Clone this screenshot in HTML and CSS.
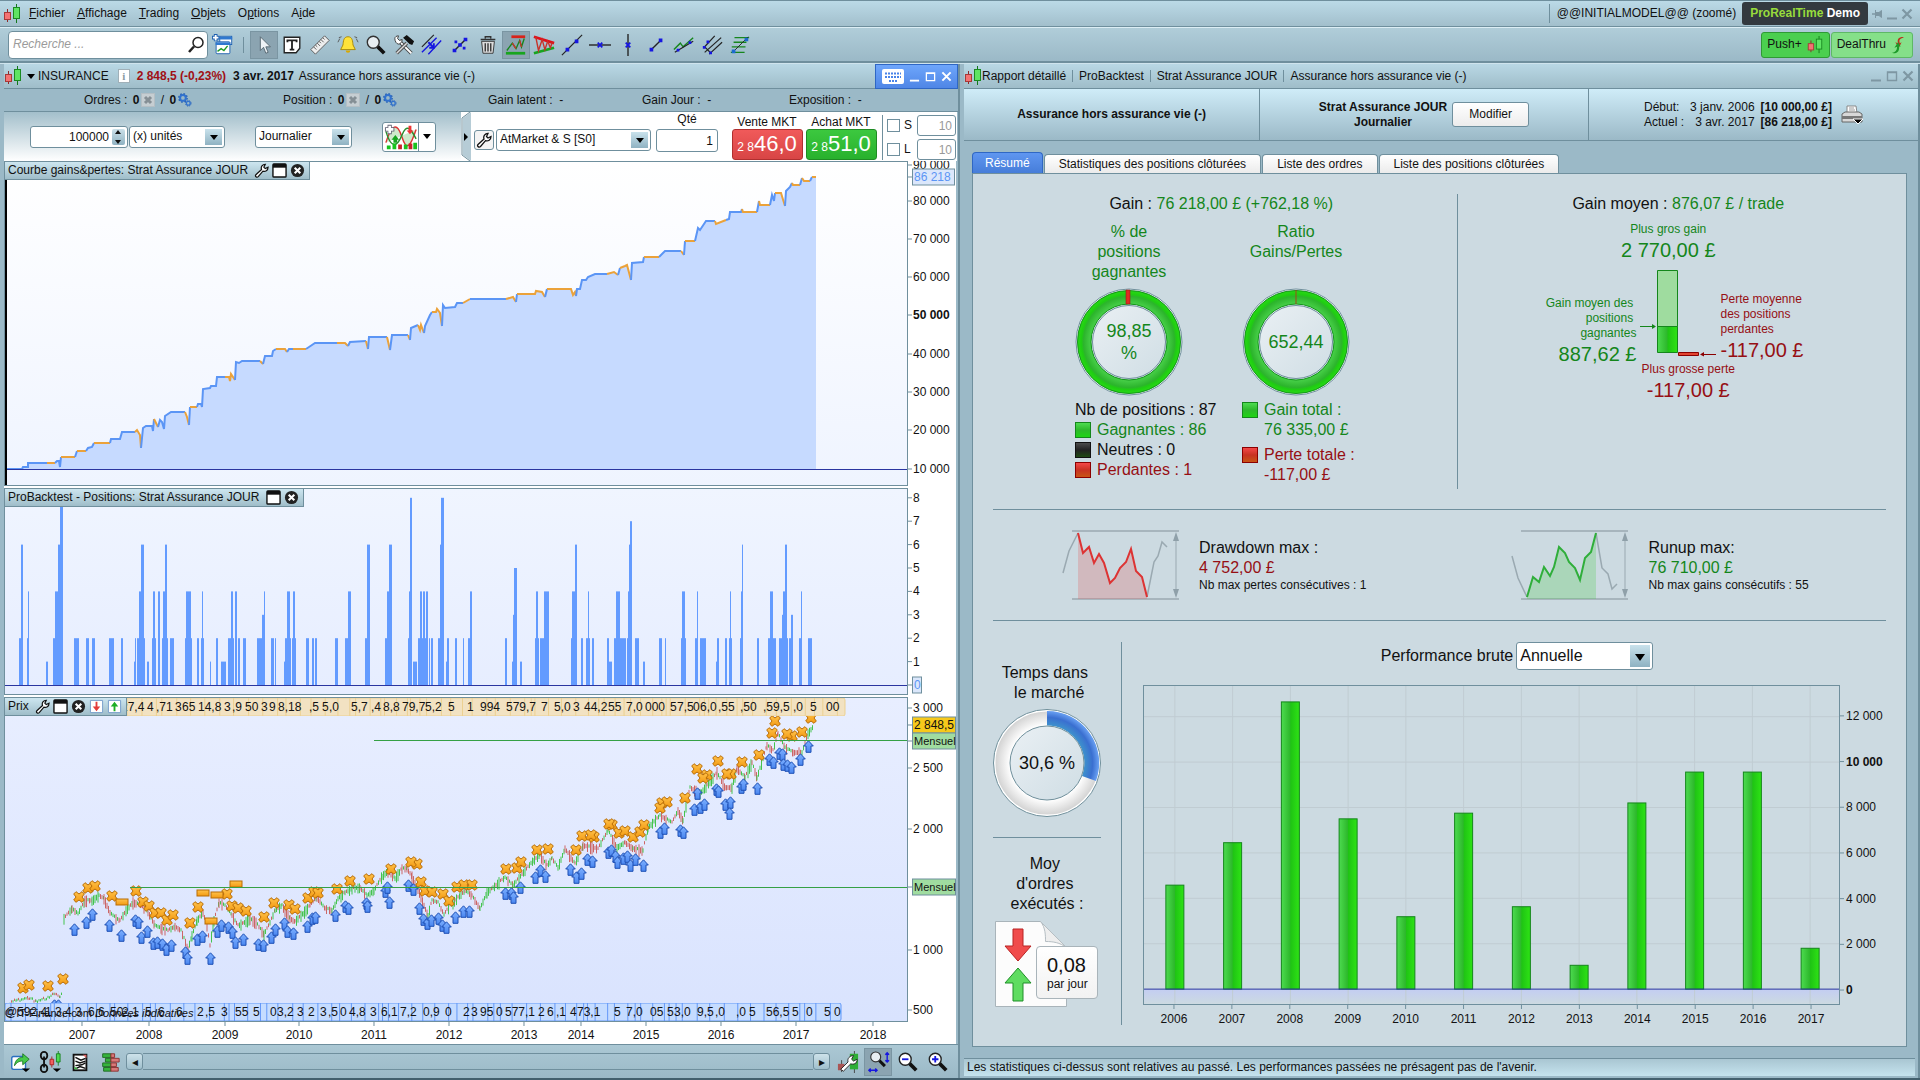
FILE: index.html
```html
<!DOCTYPE html>
<html lang="fr">
<head>
<meta charset="UTF-8" />
<meta name="viewport" content="width=device-width, initial-scale=1" />
<title>ProRealTime - Rapport détaillé</title>
<link rel="stylesheet" href="styles.css">
</head>
<body>

<svg class="defs" aria-hidden="true">
  <defs>
    <linearGradient id="g-green" x1="0" x2="1" y1="0" y2="0"><stop offset="0" stop-color="#4ddb50"/><stop offset=".48" stop-color="#2db82b"/><stop offset=".52" stop-color="#1fc414"/><stop offset="1" stop-color="#2ee315"/></linearGradient>
    <linearGradient id="g-orange" x1="0" x2="0" y1="0" y2="1"><stop offset="0" stop-color="#ffc24a"/><stop offset="1" stop-color="#f39a12"/></linearGradient>
    <linearGradient id="g-blue" x1="0" x2="0" y1="0" y2="1"><stop offset="0" stop-color="#7db0ff"/><stop offset="1" stop-color="#4a86f0"/></linearGradient>
    <linearGradient id="g-below" x1="0" x2="0" y1="0" y2="1"><stop offset="0" stop-color="#c3cdf2"/><stop offset="1" stop-color="#ccdae1"/></linearGradient>
    <linearGradient id="g-inner" x1="0" x2="1" y1="0" y2="1"><stop offset="0" stop-color="#eaf0f4"/><stop offset="1" stop-color="#cfdde4"/></linearGradient>
    <radialGradient id="g-ring" gradientUnits="userSpaceOnUse" cx="54" cy="54" r="53"><stop offset=".7" stop-color="#4bd34c"/><stop offset=".86" stop-color="#2cb42c"/><stop offset=".9" stop-color="#1fcd12"/><stop offset="1" stop-color="#2be015"/></radialGradient>
    <radialGradient id="g-white" gradientUnits="userSpaceOnUse" cx="54" cy="54" r="53"><stop offset=".7" stop-color="#fff"/><stop offset="1" stop-color="#cfcfcf"/></radialGradient>
    <radialGradient id="g-bluering" gradientUnits="userSpaceOnUse" cx="54" cy="54" r="53"><stop offset=".7" stop-color="#3e93cc"/><stop offset=".86" stop-color="#3a6fd0"/><stop offset="1" stop-color="#70a8f8"/></radialGradient>
    <symbol id="candles" viewBox="0 0 18 20"><path d="M4.500 5v13" stroke="#8d2a2a"/><rect x="1.500" y="8.500" width="6" height="7" fill="#f47373" stroke="#a83838"/><path d="M13.500 0v19" stroke="#14781b"/><rect x="10.500" y="3.500" width="6" height="11" fill="#5fe463" stroke="#1a8a22"/></symbol>
    <symbol id="wrench" viewBox="0 0 16 16"><path d="M2 12.500 8 7C7 4 9 1.500 12 1.500L10.500 4.500 12 6 15 4.500C15 8 12 9.500 9.500 8.700L4.500 14.500C3 16 .5 14 2 12.500z" fill="#fff" stroke="#111" stroke-width="1.300"/></symbol>
    <symbol id="win" viewBox="0 0 16 16"><rect x="1" y="1" width="14" height="14" rx="1" fill="#fff" stroke="#111" stroke-width="1.500"/><path d="M1 1h14v4H1z" fill="#111"/></symbol>
    <symbol id="close" viewBox="0 0 16 16"><circle cx="8" cy="8" r="7" fill="#222"/><path d="m5 5 6 6m0-6-6 6" stroke="#fff" stroke-width="2.200"/></symbol>
    <symbol id="xmark" viewBox="0 0 12 12"><path d="M3 .7 6 3 9 .7 11.300 3 9 6l2.300 3L9 11.300 6 9l-3 2.300L.7 9 3 6 .7 3z" fill="url(#g-orange)" stroke="#b86c06"/></symbol>
    <symbol id="buy" viewBox="0 0 11 13"><path d="M5.500.8 10.300 6H8v6.300H3V6H.7z" fill="url(#g-blue)" stroke="#1d4fb4"/></symbol>
    <symbol id="gears" viewBox="0 0 17 17"><circle cx="6" cy="6" r="3.500" fill="none" stroke="#3172cf" stroke-width="2.500"/><circle cx="6" cy="6" r="5.200" fill="none" stroke="#2460b8" stroke-width="1.500" stroke-dasharray="2 2.080"/><circle cx="12.500" cy="12.500" r="2.300" fill="none" stroke="#3172cf" stroke-width="1.600"/><circle cx="12.500" cy="12.500" r="3.500" fill="none" stroke="#2460b8" stroke-dasharray="1.500 1.250"/></symbol>
    <symbol id="grayx" viewBox="0 0 14 14"><rect x=".5" y=".5" width="13" height="13" fill="#c6ced2" stroke="#b4bfc5"/><path d="m4 4 6 6m0-6-6 6" stroke="#858f95" stroke-width="3"/></symbol>
    <symbol id="lens" viewBox="0 0 24 24"><path d="m13 13 8 8" stroke="#111" stroke-width="4"/><circle cx="9" cy="9" r="6.500" fill="#e8eef2" stroke="#333" stroke-width="1.500"/></symbol>
    <symbol id="wmin" viewBox="0 0 12 12"><path d="M1 10.500h10" stroke="currentColor" stroke-width="2"/></symbol>
    <symbol id="wmax" viewBox="0 0 12 12"><path d="M1.500 2h9v8.500h-9zM1 2.500h10" fill="none" stroke="currentColor" stroke-width="1.400"/></symbol>
    <symbol id="wclose" viewBox="0 0 12 12"><path d="m1.500 1.500 9 9m0-9-9 9" stroke="currentColor" stroke-width="2.200"/></symbol>
  </defs>
</svg>

<header class="menubar">
  <svg class="logo"><use href="#candles"/></svg>
  <nav>
    <a href="#"><u>F</u>ichier</a>
    <a href="#"><u>A</u>ffichage</a>
    <a href="#"><u>T</u>rading</a>
    <a href="#"><u>O</u>bjets</a>
    <a href="#">O<u>p</u>tions</a>
    <a href="#">A<u>i</u>de</a>
  </nav>
  <span class="model">@@INITIALMODEL@@ (zoomé)</span>
  <span class="brand"><b class="lime">ProRealTime</b> <b>Demo</b></span>
  <span class="wincontrols">
    <svg viewBox="0 0 12 12"><path d="M1 6h4" stroke="currentColor" stroke-width="1.500"/><path d="M4.500 2v8M5 4.500h3l2.500-2v7L8 7.500H5z" stroke="currentColor" fill="currentColor"/></svg>
    <svg><use href="#wmin"/></svg>
    <svg><use href="#wclose"/></svg>
  </span>
</header>

<div class="toolbar">
  <div class="search">
    <input type="text" placeholder="Recherche ..." aria-label="Recherche">
    <svg viewBox="0 0 18 18"><circle cx="11" cy="6.500" r="5" fill="#fff" stroke="#222" stroke-width="1.500"/><path d="M7 10.500 2 16" stroke="#222" stroke-width="2.500"/></svg>
  </div>
  <button class="tool" aria-label="Nouvelle fenêtre"><svg viewBox="0 0 24 24"><rect x="8.500" y="2.500" width="13" height="9" fill="#fff" stroke="#1d5faf"/><path d="M8 3h14v3H8z" fill="#2f78cf"/><rect x="4.500" y="8.500" width="15" height="13" rx="1" fill="#fff" stroke="#1d5faf"/><path d="M4 9h16v3H4z" fill="#2f78cf"/><path d="m6 19 4-3 3 2 4-5" stroke="#1d9a26" stroke-width="1.500" fill="none"/><path d="M4 0v8M0 4h8" stroke="#1d5faf" stroke-width="4"/><path d="M4 1v6M1 4h6" stroke="#fff" stroke-width="2"/></svg></button>
  <i class="sep"></i>
  <button class="tool on" aria-label="Curseur"><svg viewBox="0 0 24 24"><path d="M8 3v15l3.500-3.500L14 21l2.500-1-2.500-6h5z" fill="#eef3f6" stroke="#556670"/></svg></button>
  <button class="tool" aria-label="Texte"><svg viewBox="0 0 24 24"><path d="M3.500 3.500h17v12l-4 5h-13z" fill="#fff" stroke="#222" stroke-width="1.500"/><path d="M7 9V7h10v2M12 7v10M9.500 17h5" stroke="#222" stroke-width="2" fill="none"/></svg></button>
  <button class="tool" aria-label="Règle"><svg viewBox="0 0 24 24"><path d="M2 17 17 2l5 5L7 22z" fill="#eee" stroke="#555"/><path d="m5 14 3 3m-1-5 2 2m0-4 3 3m-1-5 2 2m0-4 3 3m-1-5 2 2" stroke="#555"/></svg></button>
  <button class="tool" aria-label="Alerte"><svg viewBox="0 0 24 24"><path d="M12 3c-5 0-5 5-5.500 9L4 17h16l-2.500-5C17 8 17 3 12 3z" fill="#ffe23a" stroke="#a88700"/><path d="M9.500 18a2.500 2.500 0 0 0 5 0z" fill="#d9a800"/><path d="M3 5 1 9m4-6L2 4M21 5l2 4m-4-6 3 1" stroke="#555"/></svg></button>
  <button class="tool" aria-label="Loupe"><svg viewBox="0 0 24 24"><use href="#lens"/></svg></button>
  <button class="tool" aria-label="Outils"><svg viewBox="0 0 24 24"><path d="m7 8 13 13" stroke="#444" stroke-width="4"/><path d="m7 8 13 13" stroke="#fff" stroke-width="2"/><path d="M2 5c0-2 2-3 4-3L5 5l2 2 3-1c0 3-2 5-4 5S2 8 2 5z" fill="#fff" stroke="#333"/><path d="M4 21 15 10" stroke="#555" stroke-width="4"/><path d="M4 21 15 10" stroke="#ddd" stroke-width="1.500"/><path d="m11 4 4-3 8 7-2 4-3-1-3-3z" fill="#111"/></svg></button>
  <button class="tool" aria-label="Canal"><svg viewBox="0 0 24 24"><path d="M1 14 14 1" stroke="#222" stroke-width="1.300"/><path d="M1 20 17 4M8 22 22 7" stroke="#1616e0" stroke-width="1.500"/><path d="m8 9 6 6m-5 0h5v-5" stroke="#1616e0" stroke-width="2" fill="none"/></svg></button>
  <button class="tool" aria-label="Segment"><svg viewBox="0 0 24 24"><path d="M6 18 18 6" stroke="#222" stroke-width="1.500"/><path d="M4 16h4v4H4zM16 4h4v4h-4zM10 10h4v4h-4zM6 7h3v3H6zM15 14h3v3h-3z" fill="#1616e0"/></svg></button>
  <button class="tool" aria-label="Supprimer"><svg viewBox="0 0 24 24"><path d="M5 8h14l-1.500 13h-11z" fill="#ddd" stroke="#333"/><path d="M4 6h16M9 5V3h6v2M9 10v9m3-9v9m3-9v9" stroke="#333" stroke-width="1.500" fill="none"/></svg></button>
  <button class="tool on" aria-label="Supports"><svg viewBox="0 0 24 24"><path d="M7 3h15" stroke="#d8231a" stroke-width="3"/><path d="M1 21h21" stroke="#18a51f" stroke-width="3"/><path d="m2 18 6-8 4 6 4-9 2 7 3-9" stroke="#16861d" stroke-width="1.500" fill="none"/><path d="m8 10 4 6m4-9 2 7" stroke="#c8332a" stroke-width="1.500"/></svg></button>
  <button class="tool" aria-label="Triangles"><svg viewBox="0 0 24 24"><path d="m1 3 22 7" stroke="#e0101a" stroke-width="3"/><path d="m1 21 22-6" stroke="#18a51f" stroke-width="3"/><path d="m3 3 3 15 4-12 3 11 3-9 3 7 2-6" stroke="#c8332a" stroke-width="1.500" fill="none"/></svg></button>
  <button class="tool" aria-label="Droite"><svg viewBox="0 0 24 24"><path d="M1 23 23 1" stroke="#222" stroke-width="1.300"/><path d="M5 15h4v4H5zM15 6h4v4h-4z" fill="#1616e0"/></svg></button>
  <button class="tool" aria-label="Horizontale"><svg viewBox="0 0 24 24"><path d="M0 12h24" stroke="#222" stroke-width="1.500"/><path d="m9.500 9.500 5 5m0-5-5 5" stroke="#1616e0" stroke-width="2"/></svg></button>
  <button class="tool" aria-label="Verticale"><svg viewBox="0 0 24 24"><path d="M12 0v24" stroke="#222" stroke-width="1.500"/><path d="m9.500 9.500 5 5m0-5-5 5" stroke="#1616e0" stroke-width="2"/></svg></button>
  <button class="tool" aria-label="Segment court"><svg viewBox="0 0 24 24"><path d="M7 17 17 7" stroke="#222" stroke-width="1.500"/><path d="M5 15h4v4H5zM15 5h4v4h-4z" fill="#1616e0"/></svg></button>
  <button class="tool" aria-label="Régression"><svg viewBox="0 0 24 24"><path d="m1 17 7-7 3 4 11-10" stroke="#16861d" stroke-width="1.500" fill="none"/><path d="M2 20 22 8" stroke="#222" stroke-width="1.300"/><path d="M4 16h3v3H4zM17 8h3v3h-3z" fill="#1616e0"/></svg></button>
  <button class="tool" aria-label="Fourchette"><svg viewBox="0 0 24 24"><path d="M3 15 15 2M4 20 22 4M9 22 23 9M4 14l7 7" stroke="#222" stroke-width="1.300"/><path d="M2 13h3v3H2zM9 19h3v3H9zM6 7h3v3H6z" fill="#1616e0"/></svg></button>
  <button class="tool" aria-label="Fibonacci"><svg viewBox="0 0 24 24"><path d="M6 4h16M5 9h14M3 14h15M2 20h15" stroke="#16861d" stroke-width="1.500"/><path d="M4 20 21 3" stroke="#222"/><path d="M3 17h4v4H3zM17 4h4v4h-4z" fill="#1d6ad0"/></svg></button>
  <span class="grow"></span>
  <button class="push">Push+ <svg><use href="#candles"/></svg></button>
  <button class="push deal">DealThru <svg viewBox="0 0 18 20"><path d="M15 1c-6 0-7 3-6 7l-3-1 4 6 3-6-2 1c-1-4 0-5 4-6z" fill="#b8321d"/><path d="M2 19c7 1 9-3 8-8l2 1-3-5-4 6 3-1c0 4-2 6-6 7z" fill="#1c9a29"/></svg></button>
</div>

<main class="workspace">
  <section class="panel">
    <div class="titlebar left-title">
      <svg class="logo"><use href="#candles"/></svg>
      <i class="caret"></i>
      <span>INSURANCE</span>
      <b class="info">i</b>
      <b class="down">2 848,5 (-0,23%)</b>
      <b>3 avr. 2017</b>
      <span>Assurance hors assurance vie (-)</span>
      <span class="grow"></span>
      <span class="bluecontrols">
        <svg class="kbd" viewBox="0 0 22 15"><rect width="22" height="15" rx="2" fill="#fff"/><path d="M3 4.500h16M3 8h16M7 12h9" stroke="#4a84e8" stroke-width="2" stroke-dasharray="2 1"/></svg>
        <svg><use href="#wmin"/></svg><svg><use href="#wmax"/></svg><svg><use href="#wclose"/></svg>
      </span>
    </div>

    <div class="status">
      <span>Ordres : <b>0</b> <svg><use href="#grayx"/></svg> / <b>0</b><svg><use href="#gears"/></svg></span>
      <span>Position : <b>0</b> <svg><use href="#grayx"/></svg> / <b>0</b><svg><use href="#gears"/></svg></span>
      <span>Gain latent :  -</span>
      <span>Gain Jour :  -</span>
      <span>Exposition :  -</span>
    </div>

    <div class="orderbar">
      <div class="settings">
        <span class="spin"><input type="text" value="100000" aria-label="Nombre d'unités"><i></i></span>
        <span class="drop units"><select aria-label="Unités"><option>(x) unités</option></select></span>
        <span class="drop period"><select aria-label="Période"><option>Journalier</option></select></span>
        <button class="indicator" aria-label="Indicateurs">
          <svg viewBox="0 0 36 28"><path d="M2 20c6-20 12-22 17-6s9 10 15-8" stroke="#d33" stroke-width="1.500" fill="#cfeacb"/><path d="M2 8c6 20 12 16 17 4s9-8 15 4" stroke="#2a8f2f" stroke-width="1.500" fill="none"/><path d="M3 23h4v4H3zM9 21h4v6H9zM21 22h4v5h-4zM31 20h4v7h-4z" fill="#18c31e"/><path d="M15 22h4v5h-4zM26 21h4v6h-4z" fill="#c8232b"/><path d="m12 12 4 5h-2v3h-4v-3H8z" fill="#18a51f"/><path d="M26 2h3v5h2l-3.500 4L24 7h2z" fill="#e33"/><path d="M6 1v10M1 6h10" stroke="#667" stroke-width="4.500"/><path d="M6 2v8M2 6h8" stroke="#fff" stroke-width="2.800"/></svg>
          <i class="caret"></i>
        </button>
      </div>
      <svg class="handle" viewBox="0 0 10 49" preserveAspectRatio="none"><path d="M10 0 2 6v37l8 6z" fill="#b6ccd6"/><path d="M9 0 1 6v37l8 6" fill="none" stroke="#708f9c"/><path d="m3 21 4 4-4 4z" fill="#000"/></svg>
      <div class="orders">
        <button class="cfg" aria-label="Réglages"><svg><use href="#wrench"/></svg></button>
        <span class="drop market"><select aria-label="Type d'ordre"><option>AtMarket &amp; S [S0]</option></select></span>
        <label class="qty">Qté<input type="text" value="1"></label>
        <div class="side"><span>Vente MKT</span><button class="sell"><small>2 8</small>46,0</button></div>
        <div class="side"><span>Achat MKT</span><button class="buy"><small>2 8</small>51,0</button></div>
        <div class="stops">
          <label><input type="checkbox">S</label><input type="text" value="10" aria-label="Stop">
          <label><input type="checkbox">L</label><input type="text" value="10" aria-label="Limite">
        </div>
      </div>
    </div>

    <div class="charts">
      <div class="chart equity">
        <div class="plot">
          <svg id="equity" viewBox="5 162 902 323" preserveAspectRatio="none"></svg>
          <h2 class="tag">Courbe gains&amp;pertes: Strat Assurance JOUR <svg><use href="#wrench"/></svg><svg><use href="#win"/></svg><svg><use href="#close"/></svg></h2>
        </div>
        <svg class="axis" id="equity-axis"></svg>
      </div>
      <div class="chart positions">
        <div class="plot">
          <svg id="positions" viewBox="5 489 902 205" preserveAspectRatio="none"></svg>
          <h2 class="tag">ProBacktest - Positions: Strat Assurance JOUR <svg><use href="#win"/></svg><svg><use href="#close"/></svg></h2>
        </div>
        <svg class="axis" id="positions-axis"></svg>
      </div>
      <div class="chart price">
        <div class="plot">
          <svg id="price" viewBox="5 698 902 323" preserveAspectRatio="none"></svg>
          <svg class="strip top" id="strip-top"></svg>
          <svg class="strip bottom" id="strip-bottom"></svg>
          <span class="copyright">© IT-Finance.com <em>Données indicatives</em></span>
          <h2 class="tag">Prix <svg><use href="#wrench"/></svg><svg><use href="#win"/></svg><svg><use href="#close"/></svg><svg viewBox="0 0 16 16"><path d="M1.500 1.500h13v13h-13z" fill="#fff" stroke="#7aa0cc"/><path d="M7 3h2v5h3l-4 5-4-5h3z" fill="#e33b3b"/></svg><svg viewBox="0 0 16 16"><path d="M1.500 1.500h13v13h-13z" fill="#fff" stroke="#7aa0cc"/><path d="M7 13h2V8h3L8 3 4 8h3z" fill="#1eae26"/></svg></h2>
        </div>
        <svg class="axis" id="price-axis"></svg>
      </div>
      <div class="years"><svg id="years"></svg></div>
    </div>

    <div class="scrollrow">
      <button class="tool" aria-label="Exporter"><svg viewBox="0 0 24 24"><rect x="3" y="6" width="15" height="14" rx="2" fill="#fff" stroke="#2a6fc0" stroke-width="1.500"/><path d="M6 16c1-7 5-9 9-9V3l7 6-7 6v-4c-4 0-6 1-9 5z" fill="#46c94b" stroke="#1c7a22"/><path d="M14 19h9l-4.500 4z"/></svg></button>
      <button class="tool" aria-label="Lier"><svg viewBox="0 0 24 24"><g fill="none" stroke="#111" stroke-width="2"><rect x="2" y="1" width="7" height="8" rx="3.500"/><rect x="2" y="15" width="7" height="8" rx="3.500"/><path d="M5.500 6v12"/></g><path d="M14 6v12" stroke="#a22"/><path d="M12 9h4v6h-4z" fill="#f06060" stroke="#a22"/><path d="M21 0v16" stroke="#178020"/><path d="M19 3h4v9h-4z" fill="#4ddb50" stroke="#178020"/><path d="M15 19h9l-4.500 4z"/></svg></button>
      <button class="tool" aria-label="Liste"><svg viewBox="0 0 24 24"><rect x="5" y="4" width="14" height="17" fill="#fff" stroke="#111" stroke-width="2"/><path d="m7 7 6 3 5-2M7 11l5 2 6-2M7 16l7-1 4-2M8 19l4-2 6 2" stroke="#111" stroke-width="1.500" fill="none"/><path d="M15 4h4v4z" fill="#d66"/><path d="M6 17v3h4z" fill="#36b43c"/></svg></button>
      <button class="tool" aria-label="Carnet"><svg viewBox="0 0 24 24"><path d="M4 3h9v4H4zM7 8h6v4H7zM4 13h9v4H4zM5 18h8v4H5z" fill="#36b43c" stroke="#206a25"/><path d="M13 3h4v4h-4zM13 8h9v4h-9zM13 13h6v4h-6zM13 18h8v4h-8z" fill="#d97878" stroke="#8a3030"/></svg></button>
      <button class="step" aria-label="Reculer">◂</button>
      <div class="track"></div>
      <button class="step" aria-label="Avancer">▸</button>
      <button class="tool" aria-label="Style"><svg viewBox="0 0 24 24"><path d="M5 10v13M19 0v24" stroke="#444"/><path d="M1 14h7v7H1z" fill="#a55"/><path d="M14 3h9v17h-9z" fill="#2fae36"/><path d="m4 20 8-8c-1-4 2-7 6-7l-2 4 2 2 4-2c0 5-4 6-7 5l-8 8z" fill="#fff" stroke="#222"/></svg></button>
      <button class="tool on" aria-label="Zoom auto"><svg viewBox="0 0 24 24"><use href="#lens" x="2" y="-1" width="20" height="20"/><path d="M2 21h9M22 2v10M4 19l-2 2 2 2m5-4 2 2-2 2M20 4l2-2 2 2m-4 6 2 2 2-2" stroke="#1616e0" stroke-width="1.500" fill="none"/></svg></button>
      <button class="tool" aria-label="Zoom arrière"><svg viewBox="0 0 24 24"><path d="m13 13 8 8" stroke="#111" stroke-width="4"/><circle cx="9" cy="9" r="6.500" fill="#fff" stroke="#222" stroke-width="1.500"/><path d="M5.500 9h7" stroke="#1616e0" stroke-width="2"/></svg></button>
      <button class="tool" aria-label="Zoom avant"><svg viewBox="0 0 24 24"><path d="m13 13 8 8" stroke="#111" stroke-width="4"/><circle cx="9" cy="9" r="6.500" fill="#fff" stroke="#222" stroke-width="1.500"/><path d="M5.500 9h7M9 5.500v7" stroke="#1616e0" stroke-width="2"/></svg></button>
    </div>
  </section>

  <section class="panel report">
    <div class="titlebar">
      <svg class="logo"><use href="#candles"/></svg>
      <span>Rapport détaillé</span><span class="crumb">ProBacktest</span><span class="crumb">Strat Assurance JOUR</span><span class="crumb">Assurance hors assurance vie (-)</span>
      <span class="grow"></span>
      <span class="wincontrols"><svg><use href="#wmin"/></svg><svg><use href="#wmax"/></svg><svg><use href="#wclose"/></svg></span>
    </div>

    <div class="summary">
      <div class="cell"><b>Assurance hors assurance vie (-)</b></div>
      <div class="cell strat"><b>Strat Assurance JOUR<br>Journalier</b><button class="modify">Modifier</button></div>
      <div class="cell dates">
        <table>
          <tr><td>Début:</td><td>3 janv. 2006</td><th>[10 000,00 £]</th></tr>
          <tr><td>Actuel :</td><td>3 avr. 2017</td><th>[86 218,00 £]</th></tr>
        </table>
        <svg viewBox="0 0 22 20"><path d="M6 8V1h9l1 7" fill="#fff" stroke="#888"/><path d="M8 3h5m-5 2h6" stroke="#999"/><path d="M1 9l3-2h14l3 2v8H1z" fill="#d8d8d8" stroke="#666"/><path d="M1 11h20v3H1z" fill="#777"/><path d="M12 14h10l-5 5z" stroke="#fff"/></svg>
      </div>
    </div>

    <div class="tabs">
      <button class="active">Résumé</button>
      <button>Statistiques des positions clôturées</button>
      <button>Liste des ordres</button>
      <button>Liste des positions clôturées</button>
    </div>

    <div class="content">
      <div class="gains">
        <div class="half">
          <p class="headline">Gain : <span class="pos">76 218,00 £ (+762,18 %)</span></p>
          <div class="rings">
            <div>
              <h3 class="pos">% de<br>positions<br>gagnantes</h3>
              <div class="ring">
                <svg viewBox="0 0 108 108"><circle cx="54" cy="54" r="53" fill="#eef3f5" stroke="#6f8f9b"/><circle cx="54" cy="54" r="44" fill="none" stroke="url(#g-ring)" stroke-width="15"/><circle cx="54" cy="54" r="51.500" fill="none" stroke="#14961b"/><circle cx="54" cy="54" r="38" fill="url(#g-inner)" stroke="#14961b"/><circle cx="54" cy="54" r="36.500" fill="none" stroke="#6f8f9b"/><path d="M51 2h4v14h-4z" fill="#e02c22" stroke="#a01818" stroke-width=".6"/></svg>
                <strong class="pos">98,85<br>%</strong>
              </div>
              <ul class="legend">
                <li>Nb de positions : 87</li>
                <li class="pos"><i class="green"></i>Gagnantes : 86</li>
                <li><i class="black"></i>Neutres : 0</li>
                <li class="neg"><i class="red"></i>Perdantes : 1</li>
              </ul>
            </div>
            <div>
              <h3 class="pos">Ratio<br>Gains/Pertes</h3>
              <div class="ring">
                <svg viewBox="0 0 108 108"><circle cx="54" cy="54" r="53" fill="#eef3f5" stroke="#6f8f9b"/><circle cx="54" cy="54" r="44" fill="none" stroke="url(#g-ring)" stroke-width="15"/><circle cx="54" cy="54" r="51.500" fill="none" stroke="#14961b"/><circle cx="54" cy="54" r="38" fill="url(#g-inner)" stroke="#14961b"/><circle cx="54" cy="54" r="36.500" fill="none" stroke="#6f8f9b"/><path d="M54 2v14" stroke="#a04a18"/></svg>
                <strong class="pos">652,44</strong>
              </div>
              <ul class="legend totals">
                <li class="pos"><i class="green"></i><span>Gain total :<br>76 335,00 £</span></li>
                <li class="neg"><i class="red"></i><span>Perte totale :<br>-117,00 £</span></li>
              </ul>
            </div>
          </div>
        </div>
        <div class="half average">
          <p class="headline">Gain moyen : <span class="pos">876,07 £ / trade</span></p>
          <p class="best pos">Plus gros gain<big>2 770,00 £</big></p>
          <div class="compare">
            <p class="pos">Gain moyen des&nbsp;<br>positions&nbsp;<br>gagnantes<big>887,62 £</big></p>
            <svg viewBox="0 0 84 88"><path d="M21.500 2.500h20v56h-20z" fill="#9fdc9f" stroke="#14861b"/><path d="M21.500 58.500h20v26h-20z" fill="url(#g-green)" stroke="#14861b"/><path d="M42.500 84.500h20v3h-20z" fill="#e24430" stroke="#8b0000"/><path d="M4 58.500h14" stroke="#14861b"/><path d="m16 56 4 2.500-4 2.500z" fill="#14861b"/><path d="M66 86.500h14" stroke="#8b0000"/><path d="m68 84-4 2.500 4 2z" fill="#8b0000"/></svg>
            <p class="neg">Perte moyenne<br>des positions<br>perdantes<big>-117,00 £</big></p>
          </div>
          <p class="worst neg">Plus grosse perte<big>-117,00 £</big></p>
        </div>
      </div>

      <div class="extremes">
        <div>
          <svg viewBox="0 0 116 70"><path d="M9 1h107M9 69h107" stroke="#9aa9b1" stroke-width="1.500"/><path d="m15 3 5 20 6-6 5 16 5-9 5 9 6 20 5-5 5-10 6-6 5-13 5 22 6 6 5 20v2H15z" fill="#d66" opacity=".28"/><path d="m0 43 6-22 9-18M84 67l7-35 4-6 4-14 5 5" stroke="#9aa9b1" stroke-width="1.500" fill="none"/><path d="m15 3 5 20 6-6 5 16 5-9 5 9 6 20 5-5 5-10 6-6 5-13 5 22 6 6 5 20" stroke="#dd3333" stroke-width="2" fill="none"/><path d="M113 5v60" stroke="#9aa9b1"/><path d="m110 11 3-9 3 9zm0 48 3 9 3-9z" fill="#8fa0a9"/></svg>
          <p>Drawdown max :<span class="neg">4 752,00 £</span><small>Nb max pertes consécutives : 1</small></p>
        </div>
        <div>
          <svg viewBox="0 0 116 70"><path d="M9 1h107M9 69h107" stroke="#9aa9b1" stroke-width="1.500"/><path d="m15 67 6-20 6 5 5-15 6 9 4-9 5-20 6 6 4 9 6 6 5 12 5-22 6-6 5-19v66H15z" fill="#4c4" opacity=".25"/><path d="m0 26 6 22 9 19M84 3l6 35 6 6 4 15 5-5" stroke="#9aa9b1" stroke-width="1.500" fill="none"/><path d="m15 67 6-20 6 5 5-15 6 9 4-9 5-20 6 6 4 9 6 6 5 12 5-22 6-6 5-19" stroke="#2fae3a" stroke-width="2" fill="none"/><path d="M113 5v60" stroke="#9aa9b1"/><path d="m110 11 3-9 3 9zm0 48 3 9 3-9z" fill="#8fa0a9"/></svg>
          <p>Runup max:<span class="pos">76 710,00 £</span><small>Nb max gains consécutifs : 55</small></p>
        </div>
      </div>

      <div class="activity">
        <div class="market-time">
          <h3>Temps dans&nbsp;<br>&nbsp;le marché</h3>
          <div class="ring">
            <svg viewBox="0 0 108 108"><circle cx="54" cy="54" r="53.500" fill="#fff" stroke="#6f8f9b"/><circle cx="54" cy="54" r="44" fill="none" stroke="url(#g-white)" stroke-width="15"/><path d="M54 2A52 52 0 0 1 103 72L89 67A37.500 37.500 0 0 0 54 16.500z" fill="url(#g-bluering)"/><circle cx="54" cy="54" r="37" fill="url(#g-inner)" stroke="#6f8f9b"/></svg>
            <strong>30,6 %</strong>
          </div>
          <hr>
          <h3>Moy&nbsp;<br>d'ordres&nbsp;<br>exécutés :</h3>
          <div class="sheet">
            <svg viewBox="0 0 108 90"><path d="M2.500 1.500h45l26 26v59h-71z" fill="#fcfcfc" stroke="#a9b4ba"/><path d="M47.500 1.500c5 6 5 14 5 20 8 0 14 1 21 6z" fill="#eee" stroke="#b5bec3"/><path d="M20 9h10v17h8L25 41 12 26h8z" fill="#f04c4c" stroke="#b92222"/><path d="M20 81h10V63h8L25 48 12 63h8z" fill="#5fdc61" stroke="#1f8f28"/></svg>
            <p>0,08<small>par jour</small></p>
          </div>
        </div>
        <div class="performance">
          <div class="perf-head"><label for="perf">Performance brute</label><span class="drop"><select id="perf"><option>Annuelle</option></select></span></div>
          <div class="perf-chart">
            <div class="perf-plot"><svg id="perf-plot"></svg></div>
            <svg class="perf-y" id="perf-y"></svg>
            <svg class="perf-x" id="perf-x"></svg>
          </div>
        </div>
      </div>
    </div>

    <footer>Les statistiques ci-dessus sont relatives au passé. Les performances passées ne présagent pas de l'avenir.</footer>
  </section>
</main>

<script src="script.js"></script>
</body>
</html>
```
FILE: styles.css
```css
* { box-sizing: border-box; }
body {
  margin: 0; height: 100vh; min-height: 1000px; min-width: 1500px;
  display: flex; flex-direction: column;
  border-top: 1px solid #6f8f9d; border-bottom: 2px solid #43606e;
  background: #9bb9c7; color: #111;
  font: 12px/15px "Liberation Sans", Arial, sans-serif;
}
button, input, select { font: inherit; color: inherit; margin: 0; }
a { color: inherit; text-decoration: none; }
h2, h3, p, ul { margin: 0; padding: 0; font-weight: normal; font-size: inherit; }
svg { display: block; overflow: visible; }
.defs { position: absolute; width: 0; height: 0; }
.grow { flex: 1; }
.pos { color: #14861b; }
.neg { color: #960f14; }
.caret { border: 4px solid transparent; border-top: 5px solid #000; border-bottom: 0; }

/* top bars */
.menubar, .toolbar, .titlebar { display: flex; align-items: center; }
.menubar { height: 26px; padding: 0 7px 0 3px; background: linear-gradient(#bbdae7, #a2bfcc); border-bottom: 1px solid #6f8f9d; }
.logo { width: 18px; height: 20px; flex: none; }
.menubar nav { display: flex; gap: 12px; margin-left: 8px; flex: 1; }
.model { border-left: 1px solid #6f8f9d; padding: 2px 6px 2px 7px; }
.brand { background: #33393f; color: #fff; border-radius: 3px; padding: 4px 8px; }
.brand .lime { color: #98dc3c; }
.wincontrols { display: flex; gap: 3px; margin-left: 3px; color: #7e97a3; }
.wincontrols svg { width: 12px; height: 12px; }
.toolbar { height: 36px; padding: 0 7px 0 8px; border-top: 1px solid #dceef5; border-bottom: 2px solid #6f8f9d; background: linear-gradient(#b0cdd9, #9bb9c7); }
.search { width: 200px; height: 28px; background: #fff; border: 1px solid #6f8f9d; border-radius: 4px; display: flex; align-items: center; padding: 0 2px; }
.search input { flex: 1; min-width: 0; border: 0; outline: 0; background: none; font-style: italic; }
.search input::placeholder { color: #9b9b9b; }
.search svg { width: 18px; height: 18px; }
.tool { width: 28px; height: 28px; flex: none; padding: 3px; border: 0; background: none; }
.tool svg { width: 22px; height: 22px; }
.search + .tool { margin-left: 2px; padding: 2px; }
.tool.on { background: #8ba4b1; border: 1px solid #7a95a2; padding: 2px; }
.sep { width: 1px; height: 16px; background: #6f8f9d; margin: 0 6px 0 5px; }
.push { height: 26px; display: flex; align-items: center; gap: 4px; padding: 0 5px; border: 1px solid #2f9a35; border-radius: 3px; background: #4bcf50; }
.push svg { width: 18px; height: 18px; }
.deal { background: #85e089; border-color: #5eb866; margin-left: 1px; gap: 3px; }

/* panels */
.workspace { flex: 1; min-height: 0; display: grid; grid-template-columns: 1fr 1fr; border-top: 1px solid #cfe4ed; }
.panel { min-width: 0; display: flex; flex-direction: column; border-right: 2px solid #6f8f9d; padding-left: 4px; }
.titlebar { height: 25px; background: linear-gradient(#b9d8e5, #9fbdc9); border-bottom: 1px solid #6f8f9d; }
.left-title { gap: 5px; }
.left-title .caret { margin-right: -2px; }
.info { width: 12px; height: 14px; margin: 0 2px 0 4px; background: #fff; border: 1px solid #a0b0b8; color: #8a9aa2; font: bold 11px/12px "Liberation Serif", serif; text-align: center; }
.down { color: #a01015; margin-right: 2px; }
.bluecontrols { display: flex; align-items: center; gap: 5px; height: 25px; width: 83px; padding: 0 6px; background: linear-gradient(#6ea6fb, #4f86e6); border: 1px solid #2f67c4; color: #fff; }
.bluecontrols svg { width: 11px; height: 11px; flex: none; }
.bluecontrols .kbd { width: 22px; height: 15px; }
.status { height: 23px; display: grid; grid-template-columns: 199px 205px 154px 147px 1fr; align-items: center; padding-left: 80px; border-bottom: 1px solid #6f8f9d; }
.status span { display: flex; align-items: center; gap: 2px; white-space: pre; }
.status svg { width: 14px; height: 14px; }

/* order entry */
.orderbar { height: 49px; display: flex; background: #fff; margin-right: 1px; }
.settings { flex: 1; display: flex; align-items: center; padding-left: 26px; background: linear-gradient(#a3bfcb, #fff); }
.handle { width: 10px; height: 49px; }
.spin, .drop { position: relative; display: block; }
.spin { width: 98px; }
.spin input { width: 100%; height: 22px; text-align: right; padding: 0 18px 0 4px; }
.orderbar input, .drop select { border: 1px solid #6f8f9d; border-radius: 3px; background: #fff; }
.spin i { position: absolute; top: 3px; right: 3px; bottom: 3px; width: 13px; background: linear-gradient(#cbe0e9, #8fb2c2); border-radius: 2px; }
.spin i::before, .spin i::after, .drop::after { content: ""; position: absolute; border: 4px solid transparent; }
.spin i::before { left: 3px; top: 1px; border-width: 0 3px 4px; border-bottom-color: #111; }
.spin i::after { left: 3px; bottom: 1px; border-width: 4px 3px 0; border-top-color: #111; }
.drop select { appearance: none; width: 100%; height: 22px; padding: 0 18px 0 3px; color: #111; }
.drop::before { content: ""; position: absolute; top: 3px; right: 3px; bottom: 3px; width: 17px; background: linear-gradient(#c9e2ec, #8fb2c2); pointer-events: none; }
.drop::after { top: 50%; right: 7px; margin-top: -2px; border-top: 5px solid #000; border-bottom: 0; pointer-events: none; }
.units { width: 96px; margin-left: 1px; }
.period { width: 97px; margin-left: 30px; }
.indicator { width: 54px; height: 30px; margin-left: 30px; display: flex; align-items: center; gap: 4px; padding: 0 4px 0 1px; background: #fff; border: 1px solid #6f8f9d; border-radius: 3px; }
.indicator svg { width: 37px; height: 28px; border-right: 1px solid #6f8f9d; overflow: hidden; }
.orders { display: flex; align-items: center; gap: 2px; padding: 2px 1px 0 3px; }
.cfg { width: 20px; height: 20px; padding: 1px; background: #f4f4f4; border: 1px solid #6f8f9d; border-radius: 3px; }
.cfg svg { width: 16px; height: 16px; }
.cfg, .market { margin-top: 4px; }
.market { width: 155px; }
.qty { width: 62px; margin: -11px 11px 0 3px; display: flex; flex-direction: column; text-align: center; }
.qty input { width: 100%; height: 23px; margin-top: 2px; padding: 0 4px; text-align: right; }
.side { width: 72px; text-align: center; }
.side span { display: block; line-height: 14px; }
.side button { width: 71px; height: 31px; padding: 0; border-radius: 3px; color: #fff; font-size: 22px; line-height: 28px; white-space: nowrap; }
.side small { font-size: 12px; }
.sell { background: linear-gradient(#f05a5a, #d84545); border: 1px solid #b03030; }
.buy { background: linear-gradient(#3cc83f, #28b12d); border: 1px solid #1f8b24; }
.stops { display: grid; grid-template-columns: auto 39px; gap: 3px; margin-left: 3px; padding-left: 4px; border-left: 1px solid #6f8f9d; }
.stops label { display: flex; align-items: center; gap: 4px; width: 27px; }
.stops input[type=checkbox] { appearance: none; width: 13px; height: 13px; border-radius: 0; }
.stops input[type=text] { width: 39px; height: 21px; padding: 0 3px; text-align: right; color: #999; }

/* charts */
.charts { flex: 1; min-height: 0; display: flex; flex-direction: column; background: #fff; margin-right: 2px; }
.chart { display: flex; min-height: 0; }
.equity, .price { flex: 325 1 0; }
.positions { flex: 207 1 0; }
.chart + .chart { margin-top: 2px; }
.plot { position: relative; flex: 1; min-width: 0; min-height: 0; border: 1px solid #6f8f9d; }
.plot > svg { position: absolute; inset: 0; width: 100%; height: 100%; overflow: hidden; }
.plot path, .plot line { vector-effect: non-scaling-stroke; }
.equity .plot { background: linear-gradient(#fff, #eff4ff); }
.positions .plot { background: linear-gradient(#f0f5ff, #e6edff); }
.price .plot { background: linear-gradient(#e8eeff, #d9e3fe); }
.axis { width: 48px; flex: none; overflow: hidden; }
.axis text, .years text, .strip text, .perf-chart text { font-size: 12px; fill: #111; }
.axis .word { font-size: 11px; }
.tag { position: absolute; left: 0; top: 0; height: 18px; display: flex; align-items: center; gap: 2px; padding: 0 4px 0 3px; background: linear-gradient(#cde6f0, #9fbdc9); border-right: 1px solid #6f8f9d; border-bottom: 1px solid #6f8f9d; white-space: pre; }
.tag svg { width: 15px; height: 15px; overflow: hidden; margin-left: 1px; }
.plot > .strip { height: 18px; }
.plot > .strip.bottom { top: auto; bottom: 0; }
.copyright { position: absolute; left: 0; bottom: 0; font-size: 11px; }
.years { height: 22px; padding-right: 48px; }
.years svg { width: 100%; height: 22px; }
.scrollrow { height: 34px; display: flex; align-items: center; padding: 0 4px 0 2px; border-top: 1px solid #6f8f9d; background: linear-gradient(#abc8d4, #9bb9c7); }
.scrollrow .tool { margin-right: 2px; }
.step { width: 17px; height: 17px; padding: 0; border: 1px solid #6f8f9d; border-radius: 3px; background: linear-gradient(#cde2ea, #9fbfcc); line-height: 12px; }
.track { flex: 1; height: 17px; border: solid #6f8f9d; border-width: 1px 0; }
.step + .tool { margin-left: 4px; }

/* report */
.crumb { border-left: 1px solid #6f8f9d; margin-left: 6px; padding-left: 6px; line-height: 12px; }
.report .wincontrols { margin-right: 4px; gap: 4px; }
.summary { height: 52px; display: grid; grid-template-columns: 295px 329px 1fr; border-bottom: 1px solid #6f8f9d; background: linear-gradient(#cfecf8, #9bb9c7); }
.cell { display: flex; align-items: center; justify-content: center; gap: 5px; text-align: center; }
.cell + .cell { border-left: 1px solid #6f8f9d; }
.modify { width: 77px; height: 25px; background: linear-gradient(#fff, #ececec); border: 1px solid #6f8f9d; border-radius: 3px; }
.dates table { border-spacing: 0; text-align: right; }
.dates td, .dates th { padding: 0 0 0 6px; }
.dates td:first-child { text-align: left; padding: 0; }
.dates svg { width: 22px; height: 20px; margin-left: 4px; }
.tabs { display: flex; align-items: flex-end; gap: 1px; height: 32px; padding-left: 8px; }
.tabs button { height: 19px; padding: 0 14px; border: 1px solid #6f8f9d; border-bottom: 0; border-radius: 4px 4px 0 0; background: linear-gradient(#fff, #ebebeb); }
.tabs .active { height: 21px; padding: 0 12px; background: linear-gradient(#5f96f0, #467dd9); border-color: #2f67c4; color: #fff; }
.content { flex: 1; min-height: 0; margin: 0 11px 0 8px; padding: 0 20px; display: flex; flex-direction: column; border: 1px solid #6f8f9d; background: #ccdae1; font-size: 16px; line-height: 20px; }
.gains { height: 336px; display: grid; grid-template-columns: 465fr 429fr; padding: 20px 0; border-bottom: 1px solid #6f8f9d; }
.half + .half { border-left: 1px solid #6f8f9d; }
.headline { text-align: center; height: 28px; padding-right: 8px; }
.rings { display: grid; grid-template-columns: 167px 1fr; margin-left: 82px; }
.rings h3 { width: 108px; height: 66px; text-align: center; }
.ring { position: relative; width: 108px; height: 108px; display: grid; place-items: center; text-align: center; }
.ring svg { position: absolute; inset: 0; width: 108px; height: 108px; }
.ring strong { position: relative; font-weight: normal; font-size: 18px; line-height: 22px; }
.legend { list-style: none; margin-top: 4px; }
.legend li { display: flex; align-items: flex-start; white-space: nowrap; }
.legend i { width: 16px; height: 16px; margin: 2px 6px 0 0; border: 1px solid; }
.legend .green { background: linear-gradient(#4ddb50, #2db82b 50%, #1fd414); border-color: #14861b; }
.legend .black { background: linear-gradient(#4b4b4b, #222 50%, #1e4a12); border-color: #111; }
.legend .red { background: linear-gradient(#f44848, #c83222 50%, #c85414); border-color: #8b0000; }
.totals li + li { margin-top: 5px; }
.average { font-size: 12px; line-height: 15px; }
.average .headline { font-size: 16px; line-height: 20px; padding: 0 0 0 12px; }
.average big { display: block; font-size: 20px; line-height: 26px; }
.best, .worst { text-align: center; }
.best { padding-right: 8px; height: 46px; }
.worst { padding: 8px 0 0 32px; }
.compare { display: grid; grid-template-columns: 178px 84px 1fr; height: 86px; }
.compare svg { width: 84px; height: 88px; }
.compare p { padding-top: 24px; }
.compare p:first-child { padding-top: 28px; text-align: right; }
.extremes { height: 111px; display: grid; grid-template-columns: 450fr 444fr; align-items: center; border-bottom: 1px solid #6f8f9d; }
.extremes div { display: flex; align-items: center; gap: 20px; margin-left: 70px; }
.extremes svg { width: 116px; height: 70px; }
.extremes span, .extremes small { display: block; }
.extremes small { font-size: 12px; line-height: 15px; }
.activity { flex: 1; min-height: 0; display: flex; gap: 20px; margin: 21px 0; }
.market-time { width: 108px; flex: none; padding-top: 21px; text-align: center; }
.market-time .ring { margin-top: 6px; }
.market-time hr { margin: 20px 0 16px; border: 0; border-top: 1px solid #6f8f9d; }
.sheet { position: relative; margin-top: 6px; }
.sheet p { position: absolute; left: 43px; top: 26px; width: 62px; height: 53px; padding: 8px 0 0 10px; text-align: left; font-size: 20px; line-height: 20px; background: linear-gradient(#fff, #f2f2f2); border: 1px solid #a9b4ba; border-radius: 4px; }
.sheet small { display: block; font-size: 12px; line-height: 18px; }
.performance { flex: 1; min-width: 0; display: flex; flex-direction: column; border-left: 1px solid #6f8f9d; }
.perf-head { display: flex; align-items: center; justify-content: center; gap: 3px; padding-left: 26px; }
.perf-head .drop { width: 137px; }
.perf-head select { height: 28px; }
.perf-head .drop::before { width: 20px; }
.perf-head .drop::after { border-width: 7px 5px 0; right: 8px; }
.perf-chart { flex: 1; min-height: 0; display: grid; grid-template: 1fr 20px / 1fr 46px; margin: 15px 0 0 21px; }
.perf-plot { border: 1px solid #6f8f9d; min-height: 0; }
.perf-plot svg, .perf-y, .perf-x { width: 100%; height: 100%; }
footer { height: 18px; margin: 11px 3px 2px 0; padding: 1px 3px; border-top: 1px solid #6f8f9d; background: linear-gradient(#a9c6d2, #c5e3ee); }
```
FILE: script.js
```javascript
const byId = id => document.getElementById(id);
const pct = (v, from, size) => ((v - from) / size * 100).toFixed(3) + '%';

// profit curve: b = gaining leg, o = flat or losing leg
const equity = [
  ['b', [5,469], [22,469], [23,467], [28,467], [28,463], [47,463]],
  ['o', [55,463]], ['b', [57,461], [59,461], [60,467], [61,457]], ['o', [75,457]],
  ['b', [77,451]], ['o', [86,451]], ['b', [88,448], [92,447], [94,443]], ['o', [110,443]],
  ['b', [111,439], [120,439], [122,432], [135,432]], ['o', [137,430], [140,435], [141,448]],
  ['b', [143,428], [146,426], [152,426], [153,431], [154,419]], ['o', [158,427]],
  ['b', [160,420], [162,422], [164,429], [165,416], [171,412], [185,412]], ['o', [187,417], [189,425]],
  ['b', [190,407]], ['o', [197,407]], ['b', [198,404], [201,404], [202,407], [203,389], [210,388], [211,386], [216,386], [217,377], [225,377]],
  ['o', [229,377], [230,381], [231,374], [235,380]], ['b', [236,362], [239,363], [242,361], [260,361]], ['o', [263,364]],
  ['b', [265,356], [272,356], [273,351], [276,349]], ['o', [285,349], [287,352]], ['b', [289,349], [293,349]], ['o', [306,349]],
  ['b', [309,347], [315,343], [337,343]], ['o', [345,343], [348,346]], ['b', [350,342], [366,341]], ['o', [368,349]],
  ['b', [369,337], [387,337]], ['o', [390,350]], ['b', [392,335], [408,335]], ['o', [410,340]],
  ['b', [411,328], [418,325]], ['o', [420,330], [421,325], [424,333]], ['b', [425,326], [430,315], [432,312]],
  ['o', [436,312], [437,309], [440,313], [442,326]], ['b', [443,305], [445,308], [455,307], [457,303], [463,303]],
  ['o', [470,299]], ['b', [506,299]], ['o', [513,297], [516,302]], ['b', [517,294]], ['o', [535,294], [536,291], [542,292], [545,297]],
  ['b', [547,289]], ['o', [571,289], [573,295], [575,292], [576,296]], ['b', [577,289], [580,289], [582,280], [586,280], [588,277], [595,274], [607,274]],
  ['o', [614,272], [618,275]], ['b', [620,268]], ['o', [625,266], [627,265], [631,280]], ['b', [632,263], [643,262], [644,257]],
  ['o', [659,257]], ['b', [661,255], [665,251], [681,251]], ['o', [684,255]], ['b', [685,241]], ['o', [695,241]],
  ['b', [698,228], [700,230], [706,221], [715,221]], ['o', [716,224], [726,220]], ['b', [729,219], [730,212], [741,212], [742,209]],
  ['o', [743,212], [757,212]], ['b', [759,201]], ['o', [760,205], [770,205]], ['b', [772,195], [774,201], [775,193]],
  ['o', [781,193], [785,206]], ['b', [786,191], [790,187], [792,183]], ['o', [793,185], [800,185]], ['b', [802,178]],
  ['o', [804,181], [810,181]], ['b', [812,177]], ['o', [816,177]]
];

let area = '', lines = '', last = null;
equity.forEach(([kind, ...pts]) => {
  const all = last ? [last, ...pts] : pts;
  lines += `<path d="M${all.join('L')}" fill="none" stroke="${kind === 'b' ? '#5b95f5' : '#eba23a'}" stroke-width="2"/>`;
  area += pts.join('L') + 'L';
  last = pts[pts.length - 1];
});
byId('equity').innerHTML =
  `<path d="M5,469L${area}816,469z" fill="#c6daff"/>${lines}` +
  '<path d="M5 469.500h902" stroke="#2a35a0"/><path d="M6 162v323" stroke="#000" stroke-width="2"/>';

// [x, width, number of open positions]
const positions = [
  [19,4,2],[21,2,6],[27,2,2],[28,1,4],[46,2,1],[53,10,2],[55,8,4],[58,5,6],[60,3,8],[74,5,2],[86,3,2],[92,3,2],[109,5,2],[121,2,2],
  [134,2,1],[135,1,2],[137,8,2],[139,5,4],[141,3,6],[147,2,1],[152,4,2],[153,2,4],[158,2,4],[162,6,2],[163,4,4],[165,2,6],[170,4,2],
  [185,7,2],[186,5,4],[197,2,2],[201,3,2],[202,1,4],[210,1,1],[216,2,2],[221,5,1],[228,6,2],[231,2,4],[235,2,4],[238,2,2],[243,3,2],
  [257,8,2],[262,3,3],[264,1,4],[271,3,2],[275,1,2],[284,2,1],[285,6,2],[287,3,4],[292,4,2],[293,2,4],[306,3,2],[312,2,2],[315,2,2],
  [335,3,2],[345,6,2],[348,3,4],[365,5,2],[367,3,6],[385,7,2],[387,5,4],[389,3,6],[408,3,2],[409,3,4],[410,2,8],[413,4,1],[418,10,2],
  [420,2,4],[423,2,4],[426,2,4],[429,1,2],[431,2,2],[438,6,2],[440,3,6],[441,3,8],[446,3,1],[447,2,2],[455,2,2],[463,1,2],[468,4,2],
  [470,2,4],[505,2,2],[512,2,1],[513,3,3],[514,3,5],[520,2,1],[535,4,2],[536,2,4],[540,8,2],[544,5,4],[571,6,2],[572,4,4],[575,2,6],
  [581,2,2],[586,4,2],[588,1,4],[592,2,2],[607,2,2],[609,3,1],[614,8,2],[616,4,4],[622,4,2],[627,5,2],[628,4,4],[629,3,6],[630,2,7],
  [635,4,2],[643,2,1],[659,3,2],[665,1,2],[681,5,2],[682,3,4],[695,3,2],[697,1,4],[700,6,2],[716,1,1],[717,2,2],[725,2,2],[729,3,2],
  [730,1,4],[740,3,2],[741,2,4],[742,1,6],[757,2,2],[768,8,2],[770,3,4],[779,9,2],[782,3,3],[783,4,4],[785,2,6],[789,4,2],[791,2,3],
  [799,3,2],[801,1,4],[808,4,2]
];
byId('positions').innerHTML = positions.map(([x, w, n]) =>
  `<rect x="${x}" y="${685 - n * 23.4}" width="${w}" height="${n * 23.4}" fill="#639bff"/>`).join('') +
  '<path d="M5 685.500h902" stroke="#2a35a0"/>';

const trend = [
  [[10,1002],[17,999],[28,997],[36,1000],[48,996],[55,992],[60,995],[63,990]],
  [[64,918],[72,908],[78,913],[85,900],[92,900],[99,895],[104,898],[110,912],[116,918],[120,920],[126,910],[133,902],[141,904],[148,912],
   [155,925],[162,928],[168,930],[175,926],[181,930],[188,948],[192,935],[197,920],[203,912],[207,925],[210,945],[214,920],[219,902],
   [225,905],[232,915],[238,925],[243,923],[250,918],[256,922],[264,934],[270,922],[275,910],[282,905],[290,918],[295,921],[303,913],
   [310,905],[317,897],[325,908],[332,910],[338,898],[345,892],[352,888],[360,887],[367,895],[374,890],[382,876],[388,870],[395,878],
   [402,868],[407,868],[412,876],[418,888],[424,905],[428,915],[432,900],[438,902],[444,914],[450,905],[455,900],[465,890],[472,895],
   [480,908],[487,892],[493,887],[505,877],[513,885],[533,860],[540,855],[547,865],[552,858],[558,867],[565,848],[575,863],[583,845],
   [598,848],[608,830],[617,847],[625,842],[633,848],[643,850],[648,827],[660,815],[672,822],[678,810],[683,820],[690,787],[700,793],
   [707,785],[717,772],[725,787],[732,787],[737,768],[745,777],[752,762],[757,777],[767,745],[773,750],[778,733],[785,747],[793,752],
   [802,752],[808,733],[814,725]]
];
let candles = '';
trend.forEach(leg => {
  for (let i = 1; i < leg.length; i++) {
    const [x0, y0] = leg[i - 1], [x1, y1] = leg[i];
    for (let x = x0; x < x1; x += 1.5) {
      const y = y0 + (y1 - y0) * (x - x0) / (x1 - x0);
      const r = Math.abs(Math.sin(x * 12.989) * 43758.545) % 1;
      const amp = x < 64 ? 1.5 : 2 + 6 * r * r;
      const up = (y1 < y0) === (r > .3);
      candles += `<path d="M${x} ${(y - amp + r * 3).toFixed(1)}v${(amp * 1.6).toFixed(1)}" stroke="${up ? '#45c44f' : '#cc6666'}"/>`;
    }
  }
});
const exits = [[23,988],[29,985],[48,986],[63,979],[79,897],[88,888],[95,886],[112,896],[136,891],[143,902],[149,906],[155,913],[161,913],
  [167,920],[173,915],[190,923],[198,907],[227,894],[232,906],[238,908],[246,911],[264,917],[274,903],[289,905],[295,909],[308,898],
  [314,892],[318,893],[337,889],[350,881],[369,879],[391,869],[417,864],[411,862],[421,882],[425,891],[432,892],[443,894],[449,901],
  [457,887],[464,885],[472,885],[506,869],[517,868],[521,862],[537,850],[548,849],[576,850],[582,836],[594,837],[591,835],[612,825],
  [609,824],[619,833],[625,831],[633,837],[640,832],[644,825],[662,803],[667,802],[660,808],[685,798],[697,769],[707,775],[703,778],
  [718,761],[731,774],[727,774],[742,762],[759,755],[772,733],[775,721],[792,736],[787,734],[802,732],[811,718]];
const entries = [[54,1005],[58,1005],[74,929],[86,922],[92,914],[109,925],[121,935],[135,920],[138,922],[141,937],[147,931],[153,943],[157,942],
  [162,944],[166,949],[171,945],[185,952],[187,958],[197,939],[202,936],[210,958],[217,931],[221,925],[228,927],[232,932],[235,942],
  [243,939],[258,944],[263,945],[271,937],[275,929],[284,923],[287,931],[293,933],[307,926],[312,918],[315,917],[335,915],[345,906],
  [348,908],[366,903],[367,906],[385,891],[387,887],[389,902],[408,885],[413,889],[419,908],[423,919],[427,923],[431,920],[438,918],
  [442,925],[446,927],[455,917],[463,911],[469,911],[505,893],[511,893],[513,897],[520,887],[535,877],[540,870],[545,876],[570,869],
  [576,877],[581,873],[587,859],[592,861],[608,852],[611,850],[615,856],[617,862],[623,858],[627,856],[630,865],[635,859],[643,865],
  [660,832],[664,828],[680,830],[683,832],[694,809],[697,793],[700,807],[704,804],[716,789],[718,791],[725,804],[730,802],[729,813],
  [741,787],[743,784],[757,788],[769,759],[773,762],[779,753],[782,754],[783,764],[787,765],[791,767],[800,759],[808,746]];
const blocks = [[122,902],[203,893],[217,895],[236,884],[211,921]];
byId('price').innerHTML = candles +
  entries.map(([x, y]) => `<use href="#buy" x="${x - 5}" y="${y - 6}" width="11" height="13"/>`).join('') +
  exits.map(([x, y]) => `<use href="#xmark" x="${x - 6}" y="${y - 6}" width="12" height="12"/>`).join('') +
  blocks.map(([x, y]) => `<rect x="${x - 6}" y="${y - 3}" width="12" height="6" fill="url(#g-orange)" stroke="#b86c06"/>`).join('') +
  '<path d="M374 740.500h533M130 887.500h777" stroke="#35a045"/>';

// overlapping order labels along the top and bottom edges
function strip(id, from, to, fill, edge, labels) {
  let out = `<rect x="${pct(from, 5, 902)}" width="${pct(to, from, 902)}" y="0" height="18" rx="2" fill="${fill}" stroke="${edge}"/>`;
  for (let x = from + 6; x < to; x += 3 + Math.abs(Math.sin(x * 7.31)) * 12) {
    out += `<line x1="${pct(x, 5, 902)}" x2="${pct(x, 5, 902)}" y1="0" y2="18" stroke="${edge}"/>`;
  }
  labels.forEach(([x, t]) => { out += `<text x="${pct(x, 5, 902)}" y="13">${t}</text>`; });
  byId(id).innerHTML = out;
}
strip('strip-top', 121, 845, '#f2e2c2', '#ecd091', [[121,'27,4'],[147,'4'],[156,',71'],[175,'3'],[182,'65'],[198,'14,8'],[224,'3'],[232,',9'],
  [245,'50'],[261,'3'],[269,'9'],[278,'8,18'],[309,',5'],[322,'5'],[329,',0'],[351,'5,7'],[371,',4'],[383,'8,8'],[402,'79,7'],[425,'5,2'],
  [448,'5'],[467,'1'],[480,'994'],[506,'579,7'],[541,'7'],[554,'5,0'],[573,'3'],[584,'44,2'],[608,'55'],[626,'7,0'],[645,'000'],[670,'5'],
  [677,'7,5'],[693,'0'],[700,'6,0'],[718,',55'],[740,',50'],[763,',59,5'],[793,',0'],[810,'5'],[826,'00']]);
strip('strip-bottom', 5, 841, '#c5dcff', '#6398f8', [[5,'@592,4'],[45,'1'],[55,'3,4'],[75,'3'],[88,'6,6'],[110,'50'],[122,'2,1'],[145,'5'],
  [158,'6'],[176,'6'],[197,'2'],[205,',5'],[221,'3'],[235,'55'],[253,'5'],[270,'0'],[277,'3,2'],[297,'3'],[308,'2'],[320,'3'],[328,',5'],
  [340,'0'],[349,'4,8'],[370,'3'],[381,'6,1'],[400,'7,2'],[423,'0,9'],[445,'0'],[463,'2'],[471,'3'],[480,'95'],[496,'0'],[505,'577,1'],
  [538,'2'],[547,'6'],[556,',1'],[570,'4'],[577,'73,1'],[614,'5'],[626,'7,0'],[650,'05'],[667,'5'],[674,'3,0'],[697,'9,5'],[715,',0'],
  [736,',0'],[749,'5'],[766,'56,5'],[792,'5'],[806,'0'],[824,'5'],[834,'0']]);

// value axes
function axis(id, top, size, ticks, tags) {
  byId(id).innerHTML = ticks.map(([y, t, bold]) =>
    `<svg y="${pct(y, top, size)}"><path d="M0 0h4" stroke="#6f8f9d"/><text x="5" y="4" ${bold ? 'font-weight="bold"' : ''}>${t}</text></svg>`).join('') +
    tags.map(([y, t, w, fill, ink]) =>
      `<svg y="${pct(y, top, size)}"><path d="M0 0h4" stroke="#6f8f9d"/><rect x="4.500" y="-8" width="${w}" height="16" fill="${fill}" stroke="#6f8f9d"/><text class="${/[a-z]/.test(t) ? 'word' : ''}" x="6" y="4" style="fill:${ink}">${t}</text></svg>`).join('');
}
axis('equity-axis', 161, 325, [[165,'90 000'],[201,'80 000'],[239,'70 000'],[277,'60 000'],[315,'50 000',1],[354,'40 000'],[392,'30 000'],
  [430,'20 000'],[469,'10 000']], [[177,'86 218',42,'#dbe7fb','#5b95f5']]);
axis('positions-axis', 488, 207, [8,7,6,5,4,3,2,1].map(n => [685 - n * 23.4, n]), [[685,'0',9,'#dbe7fb','#5b95f5']]);
axis('price-axis', 697, 325, [[708,'3 000'],[768,'2 500'],[829,'2 000'],[950,'1 000'],[1010,'500']],
  [[725,'2 848,5',43,'#f7c91b','#111'],[741,'Mensuel',43,'#a0dca0','#111'],[887,'Mensuel',43,'#a0dca0','#111']]);

byId('years').innerHTML = [82,149,225,299,374,449,524,581,646,721,796,873].map((x, i) =>
  `<svg x="${pct(x, 4, 904)}"><path d="M0 0v4" stroke="#6f8f9d"/><text y="17" text-anchor="middle">${2007 + i}</text></svg>`).join('');

// yearly performance
const years = [[2006,4580],[2007,6450],[2008,12650],[2009,7500],[2010,3190],[2011,7750],[2012,3630],[2013,1050],[2014,8200],[2015,9560],[2016,9560],[2017,1800]];
const perfY = v => (306 - v * 0.02292) / 321 * 100;
const perfX = i => (31 + i * 58) / 698 * 100;
byId('perf-plot').innerHTML =
  `<rect x="0" y="${perfY(0)}%" width="100%" height="${100 - perfY(0)}%" fill="url(#g-below)"/>` +
  [2000,4000,6000,8000,10000,12000].map(v => `<line x1="0" x2="100%" y1="${perfY(v)}%" y2="${perfY(v)}%" stroke="#c0ccd2"/>`).join('') +
  years.map(([y, v], i) => `<line x1="${perfX(i)}%" x2="${perfX(i)}%" y1="0" y2="100%" stroke="#c0ccd2"/>
    <rect x="${perfX(i)}%" y="${perfY(v)}%" width="18" height="${perfY(0) - perfY(v)}%" transform="translate(-9 0)" fill="url(#g-green)" stroke="#14861b"/>`).join('') +
  `<line x1="0" x2="100%" y1="${perfY(0)}%" y2="${perfY(0)}%" stroke="#2a35a0"/>`;
byId('perf-y').innerHTML = [12000,10000,8000,6000,4000,2000,0].map(v =>
  `<svg y="${perfY(v)}%"><path d="M0 0h4" stroke="#6f8f9d"/><text x="6" y="4" ${v % 10000 ? '' : 'font-weight="bold"'}>${v ? v / 1000 + ' 000' : 0}</text></svg>`).join('');
byId('perf-x').innerHTML = years.map(([y], i) =>
  `<svg x="${perfX(i)}%"><path d="M0 0v4" stroke="#6f8f9d"/><text y="18" text-anchor="middle">${y}</text></svg>`).join('');
```
